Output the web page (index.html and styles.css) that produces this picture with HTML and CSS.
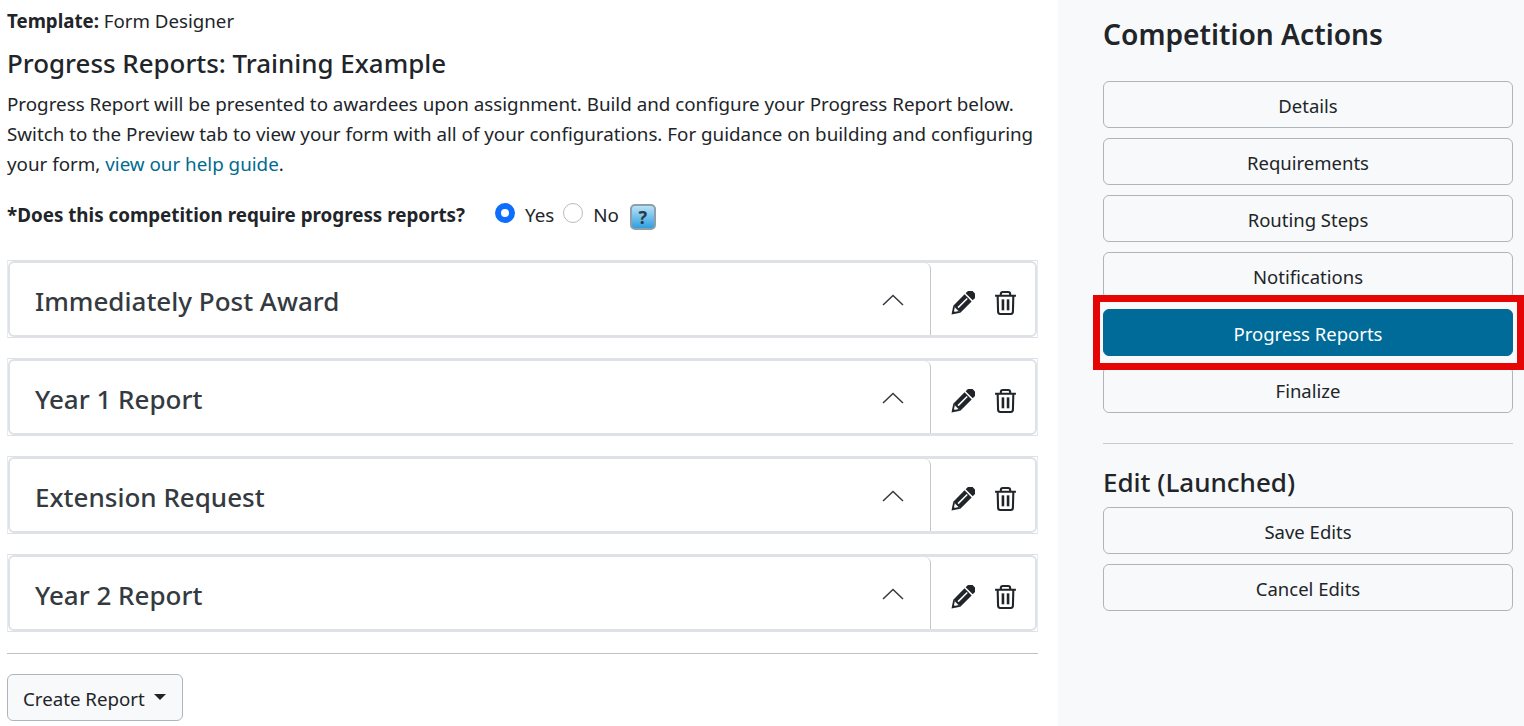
FILE: index.html
```html
<!DOCTYPE html>
<html lang="en">
<head>
    <meta charset="UTF-8">
    <meta name="viewport" content="width=device-width, initial-scale=1.0">
    <title>Progress Reports</title>
    <link rel="stylesheet" href="styles.css">
</head>
<body>
    <svg class="icon-defs" aria-hidden="true">
        <symbol id="icon-chevron" viewBox="0 0 22 12"><path d="M1 11 11 1.500 21 11" fill="none" stroke="currentColor" stroke-width="1.500"/></symbol>
        <symbol id="icon-pencil" viewBox="0 0 24 24">
            <g transform="translate(.5 23.500) rotate(-45)">
                <path d="M0 0 7.500-5V5z" fill="currentColor"/>
                <path d="M3.800-.4 7.500-2.800V2.600L4.800 1z" fill="#fff"/>
                <rect x="7.500" y="-5" width="16" height="10" fill="currentColor"/>
                <rect x="9.500" y="-1" width="13" height="1.500" fill="#fff"/>
                <path d="M25-5h4.500a2 2 0 0 1 2 2v6a2 2 0 0 1-2 2H25z" fill="currentColor"/>
            </g>
        </symbol>
        <symbol id="icon-trash" viewBox="0 0 20 23">
            <path d="M0 4.500h20M5.500 4V3a2 2 0 0 1 2-2h5a2 2 0 0 1 2 2v1M2.500 5l.4 15a2 2 0 0 0 2 2h10.200a2 2 0 0 0 2-2l.4-15" fill="none" stroke="currentColor" stroke-width="2"/>
            <rect x="6.300" y="8" width="2.500" height="10.500" fill="currentColor"/>
            <rect x="11.200" y="8" width="2.500" height="10.500" fill="currentColor"/>
        </symbol>
    </svg>

    <div class="page">
        <main class="main">
            <p class="template"><strong>Template:</strong> Form Designer</p>
            <h2 class="form-title">Progress Reports: Training Example</h2>
            <p class="intro">Progress Report will be presented to awardees upon assignment. Build and configure your Progress Report below. Switch to the Preview tab to view your form with all of your configurations. For guidance on building and configuring your form, <a href="#">view our help guide</a>.</p>

            <div class="question">
                <span class="question-label">*Does this competition require progress reports?</span>
                <label class="radio"><span class="radio-dot checked"></span>Yes</label>
                <label class="radio"><span class="radio-dot"></span>No</label>
                <span class="help-icon">?</span>
            </div>

            <section class="report">
                <div class="report-inner">
                    <div class="report-head">
                        <h3>Immediately Post Award</h3>
                        <svg class="chevron"><use href="#icon-chevron"/></svg>
                    </div>
                    <div class="report-actions">
                        <svg class="pencil"><use href="#icon-pencil"/></svg>
                        <svg class="trash"><use href="#icon-trash"/></svg>
                    </div>
                </div>
            </section>

            <section class="report">
                <div class="report-inner">
                    <div class="report-head">
                        <h3>Year 1 Report</h3>
                        <svg class="chevron"><use href="#icon-chevron"/></svg>
                    </div>
                    <div class="report-actions">
                        <svg class="pencil"><use href="#icon-pencil"/></svg>
                        <svg class="trash"><use href="#icon-trash"/></svg>
                    </div>
                </div>
            </section>

            <section class="report">
                <div class="report-inner">
                    <div class="report-head">
                        <h3>Extension Request</h3>
                        <svg class="chevron"><use href="#icon-chevron"/></svg>
                    </div>
                    <div class="report-actions">
                        <svg class="pencil"><use href="#icon-pencil"/></svg>
                        <svg class="trash"><use href="#icon-trash"/></svg>
                    </div>
                </div>
            </section>

            <section class="report">
                <div class="report-inner">
                    <div class="report-head">
                        <h3>Year 2 Report</h3>
                        <svg class="chevron"><use href="#icon-chevron"/></svg>
                    </div>
                    <div class="report-actions">
                        <svg class="pencil"><use href="#icon-pencil"/></svg>
                        <svg class="trash"><use href="#icon-trash"/></svg>
                    </div>
                </div>
            </section>

            <hr class="main-rule">
            <button class="btn create-btn" type="button">Create Report<span class="caret"></span></button>
        </main>

        <aside class="sidebar">
            <h2 class="side-title">Competition Actions</h2>
            <div class="side-buttons">
                <button class="btn" type="button">Details</button>
                <button class="btn" type="button">Requirements</button>
                <button class="btn" type="button">Routing Steps</button>
                <button class="btn" type="button">Notifications</button>
                <div class="highlighted">
                    <button class="btn btn-active" type="button">Progress Reports</button>
                    <span class="red-box"></span>
                </div>
                <button class="btn" type="button">Finalize</button>
            </div>
            <hr class="side-rule">
            <h3 class="side-subtitle">Edit (Launched)</h3>
            <div class="side-buttons">
                <button class="btn" type="button">Save Edits</button>
                <button class="btn" type="button">Cancel Edits</button>
            </div>
        </aside>
    </div>
</body>
</html>
```

FILE: styles.css
```css
body {
    margin: 0;
    padding: 0;
    font-family: "Noto Sans", "Open Sans", sans-serif;
    font-size: 18.8px;
    color: #212529;
    background-color: #fff;
}

.icon-defs {
    display: none;
}

.page {
    display: flex;
    height: 726px;
    overflow: hidden;
}

.main {
    width: 1031px;
    padding: 0 20px 0 7px;
}

.template {
    margin: 0;
    padding-top: 7px;
    font-size: 18.7px;
    line-height: 27px;
}

.form-title {
    margin: 14px 0 0;
    font-size: 25.9px;
    font-weight: 500;
    line-height: 30px;
}

.intro {
    margin: 11px 0 0;
    line-height: 30px;
}

.intro a {
    color: #006b8f;
    text-decoration: none;
}

.question {
    display: flex;
    align-items: center;
    height: 30px;
    margin: 21px 0 30px;
}

.question-label {
    font-weight: 700;
    margin-right: 30px;
}

.radio {
    display: flex;
    align-items: center;
    margin-right: 9px;
}

.radio-dot {
    width: 20px;
    height: 20px;
    box-sizing: border-box;
    margin: -4px 10px 0 0;
    border: 1px solid #bbb;
    border-radius: 50%;
    background-color: #fff;
}

.radio-dot.checked {
    border: 6px solid #0d6efd;
}

.help-icon {
    display: flex;
    align-items: center;
    justify-content: center;
    width: 26px;
    height: 26px;
    box-sizing: border-box;
    margin: 3px 0 0 2px;
    border: 2px solid #8d9fab;
    border-radius: 5px;
    background: linear-gradient(#b9e2f6, #2f9fe0);
    color: #2b3a44;
    font-size: 18px;
    font-weight: 700;
}

.report {
    height: 78px;
    box-sizing: border-box;
    margin-bottom: 20px;
    border: 1px solid #e8ebee;
    border-top-color: #dee2e6;
    border-bottom-color: #dee2e6;
}

.report-inner {
    display: flex;
    height: 100%;
    box-sizing: border-box;
    border: 2px solid #dee2e6;
    border-radius: 6px;
    background-color: #fff;
}

.report-head {
    display: flex;
    flex: 1;
    align-items: center;
    justify-content: space-between;
    padding: 3px 26px 0 25px;
    border-right: 1px solid #c4c7ca;
    border-radius: 0 6px 0 0;
}

.report-head h3 {
    margin: 0;
    font-size: 26px;
    font-weight: 500;
    color: #343a40;
}

.chevron {
    width: 22px;
    height: 12px;
    margin-top: -2px;
    color: #343a40;
}

.report-actions {
    display: flex;
    align-items: center;
    gap: 20px;
    width: 104px;
    box-sizing: border-box;
    padding: 7px 0 0 20px;
    color: #212529;
}

.pencil {
    width: 24px;
    height: 24px;
}

.trash {
    width: 21px;
    height: 24px;
}

.main-rule {
    margin: 21px 0 20px;
    border: 0;
    border-top: 1px solid #bfc1c3;
}

.btn {
    display: block;
    width: 100%;
    height: 47px;
    padding: 2px 16px 0;
    border: 1px solid #adb5bd;
    border-radius: 6px;
    background-color: #f8f9fa;
    color: #212529;
    font-family: inherit;
    font-size: 18.5px;
}

.create-btn {
    display: flex;
    align-items: center;
    width: auto;
    padding-left: 15px;
    font-size: 18.7px;
}

.caret {
    margin-left: 9px;
    margin-top: -4px;
    border-top: 6px solid #212529;
    border-left: 6px solid transparent;
    border-right: 6px solid transparent;
}

.sidebar {
    flex: 1;
    padding: 0 11px 0 45px;
    background-color: #f8f9fa;
}

.side-title {
    margin: 15px 0 28px;
    font-size: 28.2px;
    font-weight: 600;
    line-height: 38px;
}

.side-buttons {
    display: flex;
    flex-direction: column;
    gap: 10px;
}

.highlighted {
    position: relative;
}

.btn-active {
    border-color: #006b99;
    background-color: #006b99;
    color: #fff;
}

.red-box {
    position: absolute;
    top: -14px;
    left: -10px;
    right: -11px;
    bottom: -14px;
    border: 7px solid #e60505;
}

.side-rule {
    margin: 30px 0 19px;
    border: 0;
    border-top: 1px solid #c9cbcd;
}

.side-subtitle {
    margin: 0 0 6px;
    font-size: 26px;
    font-weight: 500;
    line-height: 38px;
}
```
